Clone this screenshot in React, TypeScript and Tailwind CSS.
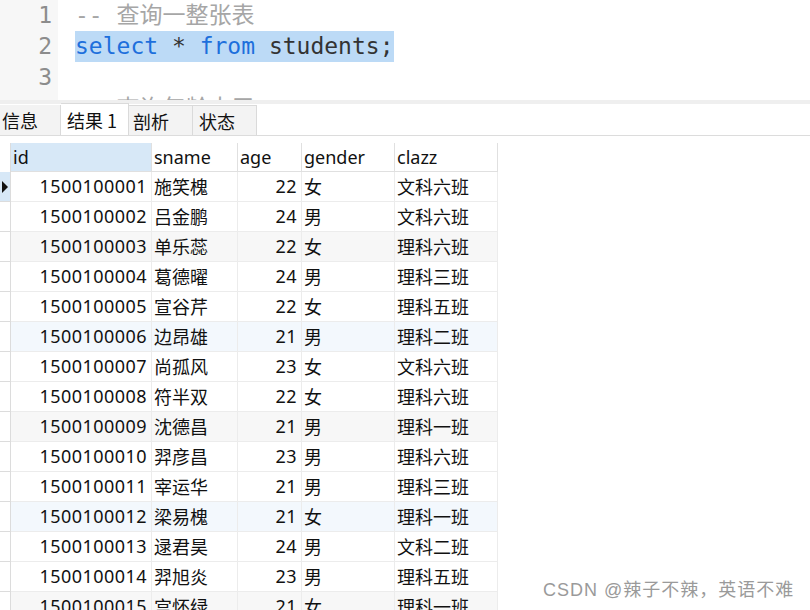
const rows = [
  ["1500100001", "施笑槐", "22", "女", "文科六班"],
  ["1500100002", "吕金鹏", "24", "男", "文科六班"],
  ["1500100003", "单乐蕊", "22", "女", "理科六班"],
  ["1500100004", "葛德曜", "24", "男", "理科三班"],
  ["1500100005", "宣谷芹", "22", "女", "理科五班"],
  ["1500100006", "边昂雄", "21", "男", "理科二班"],
  ["1500100007", "尚孤风", "23", "女", "文科六班"],
  ["1500100008", "符半双", "22", "女", "理科六班"],
  ["1500100009", "沈德昌", "21", "男", "理科一班"],
  ["1500100010", "羿彦昌", "23", "男", "理科六班"],
  ["1500100011", "宰运华", "21", "男", "理科三班"],
  ["1500100012", "梁易槐", "21", "女", "理科一班"],
  ["1500100013", "逯君昊", "24", "男", "文科二班"],
  ["1500100014", "羿旭炎", "23", "男", "理科五班"],
  ["1500100015", "宫怀绿", "21", "女", "理科一班"],
];

const rowBg = (i: number) => {
  if (i % 3 !== 2) return "bg-white";
  return i % 6 === 2 ? "bg-[#f7f7f7]" : "bg-[#f3f8fd]";
};

const App = () => {
  return (
    <main
      className="w-[810px] h-[610px] overflow-hidden bg-white relative text-[#111]"
      style={{ fontFamily: '"Noto Sans", "Noto Sans CJK SC", sans-serif' }}
    >
      {/* editor */}
      <section className="flex h-[100px] overflow-hidden">
        <div className="w-[58px] bg-[#f7f7f7] flex flex-col items-end pr-[6px] text-[#8c8c8c] text-[23px] leading-[31px] font-['DejaVu_Sans_Mono',monospace]">
          <div>1</div>
          <div>2</div>
          <div>3</div>
        </div>
        <div className="pl-[17px] text-[23px] leading-[31px] font-['DejaVu_Sans_Mono','Noto_Sans_CJK_SC',monospace]">
          <div className="text-[#a6a6a6] whitespace-pre">-- 查询一整张表</div>
          <div className="whitespace-pre bg-[#bcdaf6] inline-block">
            <span className="text-[#1d6fdc]">select</span>
            <span className="text-[#333]"> * </span>
            <span className="text-[#1d6fdc]">from</span>
            <span className="text-[#333]"> students;</span>
          </div>
          <div className="h-[31px]"></div>
          <div className="h-[7px] overflow-hidden">
            <div className="text-[#a6a6a6] whitespace-pre">-- 查询年龄大于</div>
          </div>
        </div>
      </section>
      <div className="h-[4px] bg-[#efefef]"></div>

      {/* tabs */}
      <nav className="flex items-end h-[32px] border-b border-[#dcdcdc] text-[18px] leading-none font-['Noto_Sans_CJK_SC',sans-serif]">
        <div className="w-[61px] h-[30px] flex items-center bg-[#f3f3f3] border-r border-[#dadada] pl-[2px]">信息</div>
        <div className="w-[68px] h-[32px] flex items-center bg-white border-r border-t border-[#dadada] pl-[6px]">结果 1</div>
        <div className="w-[64px] h-[30px] flex items-center bg-[#f3f3f3] border-r border-t border-[#dadada] pl-[4px]">剖析</div>
        <div className="w-[64px] h-[30px] flex items-center bg-[#f3f3f3] border-r border-t border-[#dadada] pl-[6px]">状态</div>
      </nav>

      {/* grid */}
      <section className="mt-[7px] text-[18px] w-fit">
        <div className="flex h-[29px] leading-[28px]">
          <div className="w-[11px] border-r border-[#dcdcdc]"></div>
          <div className="w-[141px] bg-[#d7e8f7] border-r border-b border-[#e0e0e0] pl-[2px]">id</div>
          <div className="w-[86px] border-r border-b border-[#e0e0e0] pl-[2px]">sname</div>
          <div className="w-[64px] border-r border-b border-[#e0e0e0] pl-[2px]">age</div>
          <div className="w-[93px] border-r border-b border-[#e0e0e0] pl-[2px]">gender</div>
          <div className="w-[103px] border-r border-b border-[#e0e0e0] pl-[2px]">clazz</div>
        </div>
        {rows.map((r, i) => (
          <div key={i} className={`flex h-[30px] leading-[29px] ${rowBg(i)}`}>
            <div
              className={`w-[11px] border-r border-b border-[#dcdcdc] flex items-center ${
                i === 0 ? "bg-[#d7e8f7]" : "bg-white"
              }`}
            >
              {i === 0 && (
                <svg width="7" height="12" viewBox="0 0 7 12" className="ml-[2px]">
                  <path d="M0 0 L6 6 L0 12 Z" fill="#111" />
                </svg>
              )}
            </div>
            <div className="w-[141px] border-r border-b border-[#ececec] text-right pr-[4px] tracking-[0.45px]">{r[0]}</div>
            <div className="w-[86px] border-r border-b border-[#ececec] pl-[2px] font-['Noto_Sans_CJK_SC',sans-serif]">{r[1]}</div>
            <div className="w-[64px] border-r border-b border-[#ececec] text-right pr-[4px] tracking-[0.45px]">{r[2]}</div>
            <div className="w-[93px] border-r border-b border-[#ececec] pl-[2px] font-['Noto_Sans_CJK_SC',sans-serif]">{r[3]}</div>
            <div className="w-[103px] border-r border-b border-[#ececec] pl-[2px] font-['Noto_Sans_CJK_SC',sans-serif]">{r[4]}</div>
          </div>
        ))}
      </section>

      <div className="absolute left-[543px] top-[577px] text-[18px] tracking-[1px] text-[#9a9a9a] font-['Liberation_Sans','Noto_Sans_CJK_SC',sans-serif]">
        CSDN @辣子不辣，英语不难
      </div>
    </main>
  );
};

export default App;
